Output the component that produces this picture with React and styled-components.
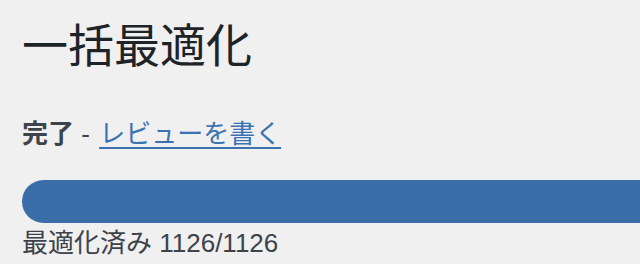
import styled, { createGlobalStyle } from "styled-components"

const Global = createGlobalStyle`
  html, body {
    margin: 0;
    padding: 0;
    background: #f0f0f1;
    overflow: hidden;
  }
  body {
    font-family: "Liberation Sans", "Noto Sans CJK JP", sans-serif;
  }
`

const Page = styled.div`
  width: 640px;
  height: 264px;
  padding: 0 0 0 22px;
  box-sizing: border-box;
  overflow: hidden;
`

const Title = styled.h1`
  margin: 0;
  padding-top: 13px;
  font-size: 46px;
  line-height: 66px;
  font-weight: 400;
  color: #1d2327;
`

const Status = styled.p`
  margin: 38px 0 0;
  font-size: 26px;
  line-height: 34px;
  color: #3c434a;
  b {
    font-weight: 700;
  }
  a {
    margin-left: 2px;
    color: #3a72b3;
    text-decoration: underline;
    text-underline-offset: 4px;
    text-decoration-thickness: 2px;
  }
`

const Bar = styled.div`
  margin-top: 29px;
  width: 680px;
  height: 43px;
  border-radius: 22px 0 0 22px;
  background: #3a6ea9;
`

const Count = styled.div`
  margin-top: 2px;
  font-size: 26px;
  line-height: 36px;
  color: #3c434a;
`

export default function App() {
  return (
    <Page>
      <Global />
      <Title>一括最適化</Title>
      <Status>
        <b>完了</b> - <a href="#">レビューを書く</a>
      </Status>
      <Bar />
      <Count>最適化済み 1126/1126</Count>
    </Page>
  )
}
